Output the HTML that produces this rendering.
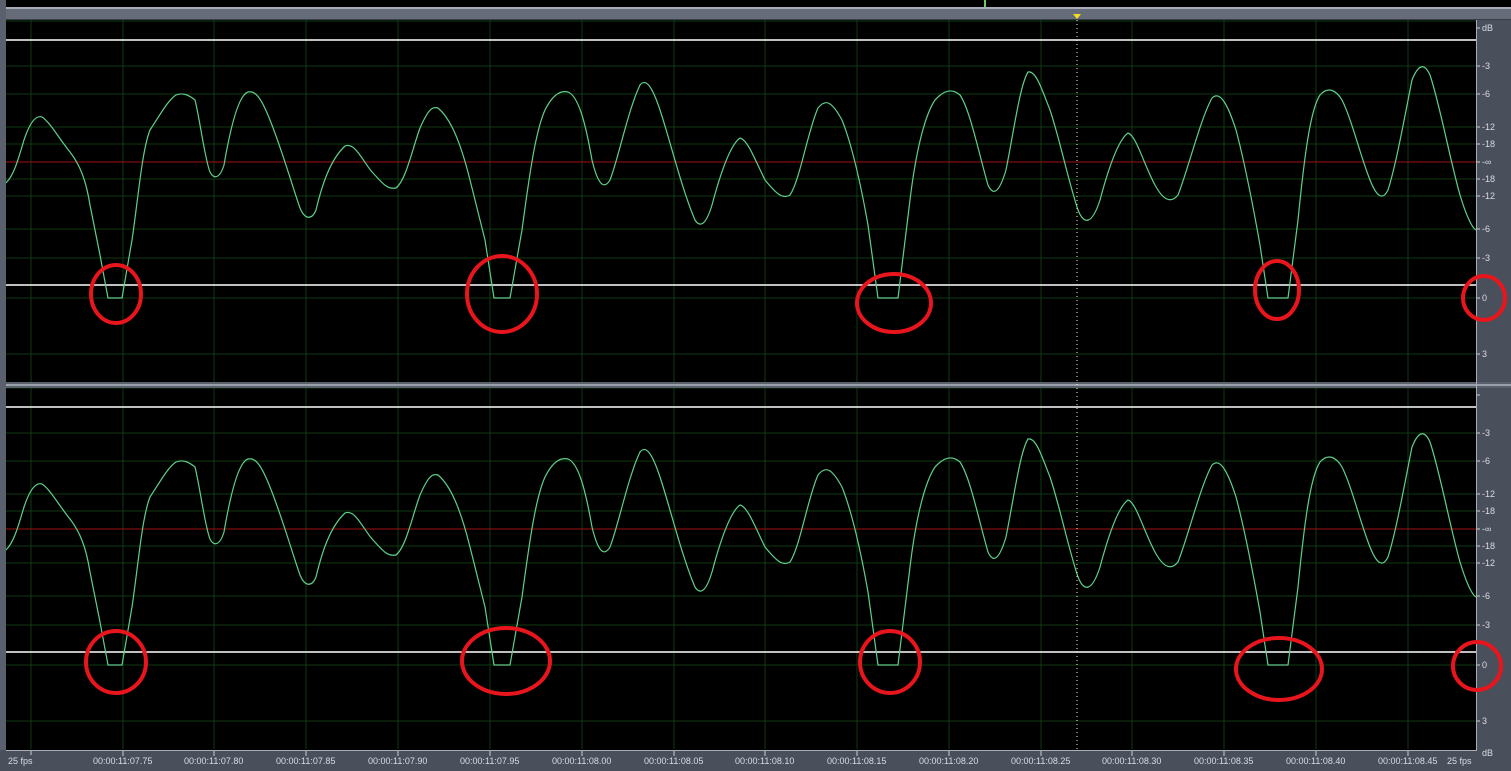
<!DOCTYPE html>
<html><head><meta charset="utf-8"><style>
html,body{margin:0;padding:0;background:#000;width:1511px;height:771px;overflow:hidden}
svg{display:block}
text{font-family:"Liberation Sans",sans-serif;font-size:9px;fill:#d8dce4}
</style></head><body>
<svg width="1511" height="771" viewBox="0 0 1511 771" xmlns="http://www.w3.org/2000/svg">
<defs>
<g id="panel">
  <g stroke="#0f3a12" stroke-width="1">
    <line x1="6" y1="21" x2="1476" y2="21"/>
    <line x1="6" y1="66" x2="1476" y2="66"/>
    <line x1="6" y1="94" x2="1476" y2="94"/>
    <line x1="6" y1="127" x2="1476" y2="127"/>
    <line x1="6" y1="144" x2="1476" y2="144"/>
    <line x1="6" y1="179" x2="1476" y2="179"/>
    <line x1="6" y1="196" x2="1476" y2="196"/>
    <line x1="6" y1="229" x2="1476" y2="229"/>
    <line x1="6" y1="258" x2="1476" y2="258"/>
    <line x1="6" y1="298" x2="1476" y2="298"/>
    <line x1="6" y1="354" x2="1476" y2="354"/>
    <line x1="31" y1="20" x2="31" y2="382"/>
    <line x1="123" y1="20" x2="123" y2="382"/>
    <line x1="214" y1="20" x2="214" y2="382"/>
    <line x1="306" y1="20" x2="306" y2="382"/>
    <line x1="398" y1="20" x2="398" y2="382"/>
    <line x1="490" y1="20" x2="490" y2="382"/>
    <line x1="582" y1="20" x2="582" y2="382"/>
    <line x1="674" y1="20" x2="674" y2="382"/>
    <line x1="765" y1="20" x2="765" y2="382"/>
    <line x1="857" y1="20" x2="857" y2="382"/>
    <line x1="949" y1="20" x2="949" y2="382"/>
    <line x1="1041" y1="20" x2="1041" y2="382"/>
    <line x1="1132" y1="20" x2="1132" y2="382"/>
    <line x1="1224" y1="20" x2="1224" y2="382"/>
    <line x1="1316" y1="20" x2="1316" y2="382"/>
    <line x1="1408" y1="20" x2="1408" y2="382"/>
  </g>
  <line x1="6" y1="40" x2="1476" y2="40" stroke="#fff" stroke-width="1.5"/>
  <line x1="6" y1="285" x2="1476" y2="285" stroke="#fff" stroke-width="1.5"/>
  <line x1="6" y1="162" x2="1476" y2="162" stroke="#a01010" stroke-width="1"/>
  <path fill="none" stroke="#5fd08a" stroke-width="1.2" stroke-linejoin="round" d="M6,183 C14,175 18,160 24,140 C30,122 36,115 42,117 C50,122 60,140 70,152 C80,165 86,180 90,205 L100,255 L108,298 L122,298 L132,240 C138,200 142,150 150,130 C160,115 168,100 176,95 C184,92 190,96 195,100 C200,120 205,160 210,172 C214,180 220,178 224,165 C230,130 238,95 248,92 C256,90 262,100 270,120 C282,150 292,185 300,208 C305,220 312,220 316,210 C322,185 330,160 345,146 C355,142 362,160 372,172 C380,180 386,190 396,188 C406,180 412,150 420,128 C428,110 432,106 438,108 C450,118 460,140 470,180 L485,240 L494,298 L510,298 L522,230 C530,170 536,130 545,110 C552,96 560,90 568,92 C578,96 585,120 592,160 C598,185 604,190 610,180 C618,160 628,110 640,85 C646,78 652,86 660,110 C670,140 682,190 695,220 C700,228 706,225 712,205 C720,175 730,145 740,138 C748,140 755,160 765,180 C775,192 782,200 790,195 C800,180 808,130 818,108 C826,98 832,102 842,120 C852,145 860,180 868,225 L878,298 L898,298 L910,200 C916,150 925,115 935,100 C944,90 952,88 960,95 C970,110 978,150 988,185 C994,198 1000,190 1006,170 C1014,130 1020,85 1028,72 C1036,70 1042,90 1050,110 C1060,140 1068,180 1078,210 C1084,225 1092,225 1100,200 C1108,170 1118,140 1128,133 C1136,135 1144,165 1155,185 C1162,198 1170,205 1178,195 C1188,170 1200,120 1212,98 C1220,90 1228,105 1236,130 C1244,160 1252,200 1260,245 L1268,298 L1288,298 L1298,220 C1304,160 1310,110 1320,95 C1328,86 1336,90 1342,100 C1352,120 1360,155 1370,180 C1376,195 1382,202 1388,190 C1396,165 1404,120 1412,80 C1418,65 1424,62 1430,75 C1440,105 1450,160 1460,195 C1466,215 1472,228 1476,230"/>
  <g stroke="#c8ccd4" stroke-width="1">
    <line x1="1477" y1="28" x2="1480" y2="28"/>
    <line x1="1477" y1="66" x2="1480" y2="66"/>
    <line x1="1477" y1="94" x2="1480" y2="94"/>
    <line x1="1477" y1="127" x2="1480" y2="127"/>
    <line x1="1477" y1="144" x2="1480" y2="144"/>
    <line x1="1477" y1="162" x2="1480" y2="162"/>
    <line x1="1477" y1="179" x2="1480" y2="179"/>
    <line x1="1477" y1="196" x2="1480" y2="196"/>
    <line x1="1477" y1="229" x2="1480" y2="229"/>
    <line x1="1477" y1="258" x2="1480" y2="258"/>
    <line x1="1477" y1="298" x2="1480" y2="298"/>
    <line x1="1477" y1="354" x2="1480" y2="354"/>
  </g>
</g>
</defs>

<rect x="0" y="0" width="1511" height="8" fill="#000"/>
<rect x="984" y="0" width="2" height="7" fill="#6c6"/>
<rect x="0" y="7" width="1511" height="2" fill="#a8adb8"/>
<rect x="0" y="9" width="1511" height="11" fill="#666c7a"/>
<rect x="0" y="19" width="1511" height="1" fill="#3a3e48"/>
<rect x="1476" y="20" width="35" height="751" fill="#4a4f5c"/>

<use href="#panel"/>
<use href="#panel" transform="translate(0,367)"/>

<rect x="0" y="382" width="1511" height="3" fill="#5a606c"/>
<rect x="0" y="384" width="1511" height="2" fill="#9aa0ab"/>
<rect x="0" y="386" width="1511" height="2" fill="#5a606c"/>
<rect x="0" y="0" width="6" height="771" fill="#5a606c"/>
<rect x="1476" y="20" width="1" height="731" fill="#a8adb8"/>

<line x1="1077" y1="20" x2="1077" y2="771" stroke="#fff8c0" stroke-width="1" stroke-dasharray="1,3"/>
<polygon points="1073,14 1081,14 1077,19" fill="#f0e020"/>

<g>
<text x="1482" y="31">dB</text>
<text x="1482" y="69">-3</text><text x="1482" y="97">-6</text><text x="1482" y="130">-12</text><text x="1482" y="147">-18</text>
<text x="1482" y="165">-∞</text><text x="1482" y="182">-18</text><text x="1482" y="199">-12</text><text x="1482" y="232">-6</text>
<text x="1482" y="261">-3</text><text x="1482" y="301">0</text><text x="1482" y="357">3</text>
<text x="1482" y="436">-3</text><text x="1482" y="464">-6</text><text x="1482" y="497">-12</text><text x="1482" y="514">-18</text>
<text x="1482" y="532">-∞</text><text x="1482" y="549">-18</text><text x="1482" y="566">-12</text><text x="1482" y="599">-6</text>
<text x="1482" y="628">-3</text><text x="1482" y="668">0</text><text x="1482" y="724">3</text>
<text x="1482" y="756">dB</text>
</g>

<rect x="0" y="750" width="1477" height="21" fill="#4a4f5c"/>
<rect x="6" y="750" width="1471" height="1" fill="#a8adb8"/>
<g stroke="#c8ccd4" stroke-width="1">
<line x1="31" y1="751" x2="31" y2="755"/><line x1="123" y1="751" x2="123" y2="756"/><line x1="214" y1="751" x2="214" y2="756"/><line x1="306" y1="751" x2="306" y2="756"/><line x1="398" y1="751" x2="398" y2="756"/><line x1="490" y1="751" x2="490" y2="756"/><line x1="582" y1="751" x2="582" y2="756"/><line x1="674" y1="751" x2="674" y2="756"/><line x1="765" y1="751" x2="765" y2="756"/><line x1="857" y1="751" x2="857" y2="756"/><line x1="949" y1="751" x2="949" y2="756"/><line x1="1041" y1="751" x2="1041" y2="756"/><line x1="1132" y1="751" x2="1132" y2="756"/><line x1="1224" y1="751" x2="1224" y2="756"/><line x1="1316" y1="751" x2="1316" y2="756"/><line x1="1408" y1="751" x2="1408" y2="756"/>
</g>
<g fill="#d8dce4" font-size="9">
<text x="8" y="764">25 fps</text>
<text x="93" y="764">00:00:11:07.75</text>
<text x="184" y="764">00:00:11:07.80</text>
<text x="276" y="764">00:00:11:07.85</text>
<text x="368" y="764">00:00:11:07.90</text>
<text x="460" y="764">00:00:11:07.95</text>
<text x="552" y="764">00:00:11:08.00</text>
<text x="644" y="764">00:00:11:08.05</text>
<text x="735" y="764">00:00:11:08.10</text>
<text x="827" y="764">00:00:11:08.15</text>
<text x="919" y="764">00:00:11:08.20</text>
<text x="1011" y="764">00:00:11:08.25</text>
<text x="1102" y="764">00:00:11:08.30</text>
<text x="1194" y="764">00:00:11:08.35</text>
<text x="1286" y="764">00:00:11:08.40</text>
<text x="1378" y="764">00:00:11:08.45</text>
<text x="1447" y="764">25 fps</text>
</g>

<g fill="none" stroke="#e8161c" stroke-width="4">
<ellipse cx="116" cy="294" rx="25" ry="29"/>
<ellipse cx="502" cy="294" rx="35" ry="38"/>
<ellipse cx="894" cy="303" rx="37" ry="29"/>
<ellipse cx="1277" cy="290" rx="22" ry="29"/>
<ellipse cx="1484" cy="298" rx="21" ry="22"/>
<ellipse cx="116" cy="662" rx="30" ry="31"/>
<ellipse cx="506" cy="661" rx="44" ry="33"/>
<ellipse cx="890" cy="662" rx="30" ry="31"/>
<ellipse cx="1279" cy="669" rx="43" ry="31"/>
<ellipse cx="1477" cy="666" rx="24" ry="24"/>
</g>
</svg>
</body></html>
